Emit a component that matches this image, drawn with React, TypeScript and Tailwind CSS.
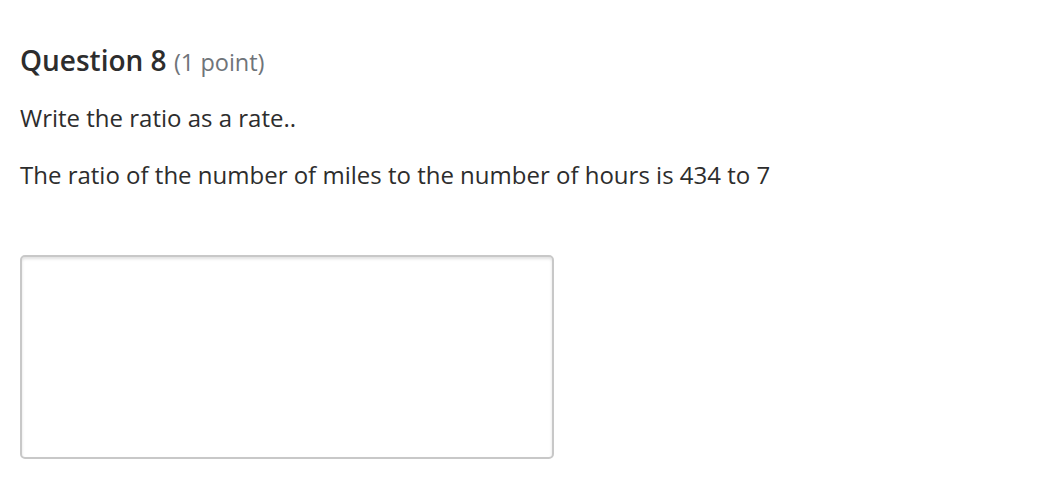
import React from "react";

export default function App() {
  return (
    <div className="w-[1038px] h-[497px] bg-white px-[20px] pt-[42px]" style={{ fontFamily: '"Open Sans", sans-serif' }}>
      <h2 className="text-[28px] leading-[36px] font-semibold text-[#2d2d2d]">
        Question 8 <span className="text-[23.5px] font-normal text-[#6f7479]">(1 point)</span>
      </h2>
      <p className="mt-[22px] text-[24px] leading-[32px] text-[#2d2d2d]">Write the ratio as a rate..</p>
      <p className="mt-[25px] text-[24px] leading-[32px] text-[#2d2d2d]">
        The ratio of the number of miles to the number of hours is 434 to 7
      </p>
      <textarea className="mt-[64px] block w-[534px] h-[204px] rounded-[5px] border-2 border-[#c8c8c8] shadow-[inset_0_2px_3px_rgba(0,0,0,0.12)] resize-none outline-none" />
    </div>
  );
}
